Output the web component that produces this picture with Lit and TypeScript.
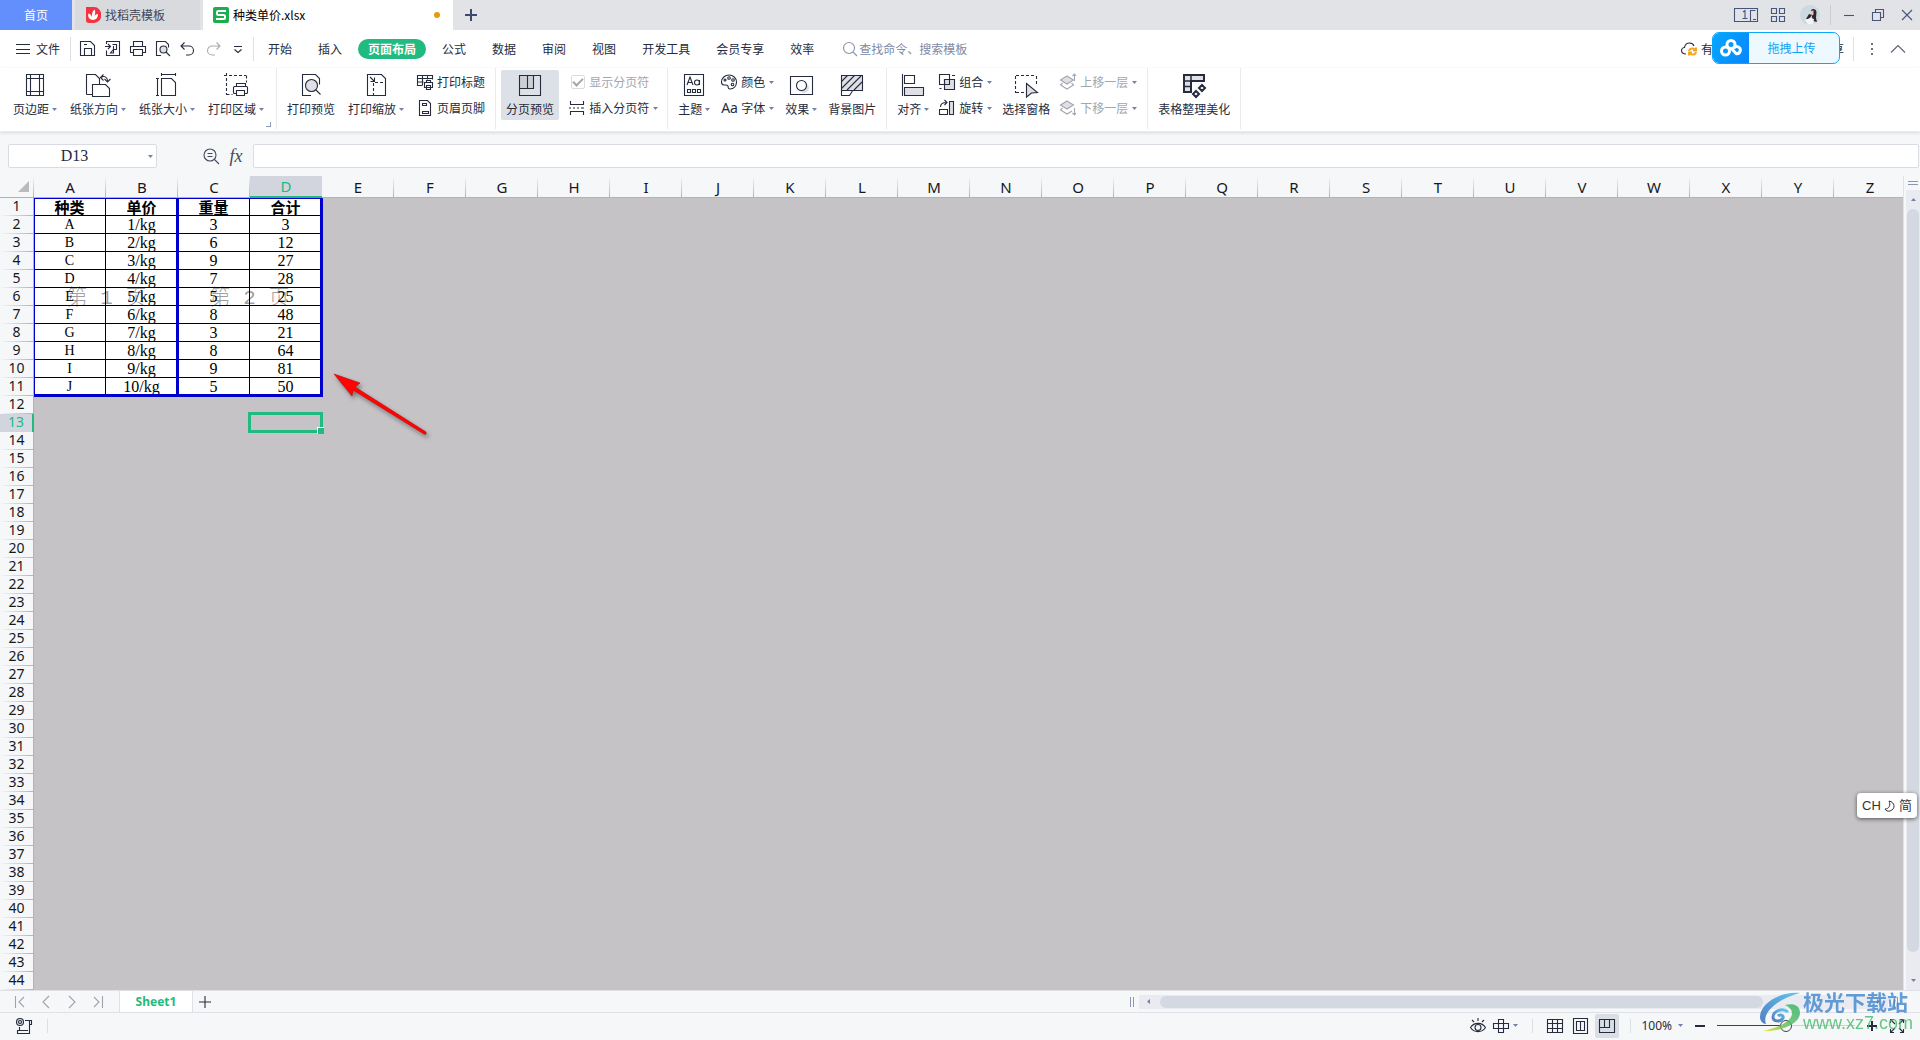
import { LitElement, html, svg, css, nothing, type TemplateResult } from "lit";
import { customElement } from "lit/decorators.js";
import { classMap } from "lit/directives/class-map.js";

const icon = (size: number, body: unknown, cls = "") =>
  html`<svg class="icon ${cls}" width=${size} height=${size} viewBox="0 0 ${size} ${size}" aria-hidden="true">${body}</svg>`;

const caret = html`<svg class="caret" width="5" height="3" viewBox="0 0 5 3" aria-hidden="true"><path d="M0 0h5L2.500 3z" /></svg>`;

/* 24px ribbon icons */
const big: Record<string, unknown> = {
  margins: svg`<path d="M3.500 1.500h17v21h-17zM7.500 1.500v21M16.500 1.500v21M3.500 5.500h17M3.500 18.500h17" />`,
  orient: svg`<path class="w" d="M.5 21.500v-20h9l4 4v6M.5 21.500h6" /><path class="w" d="M6.500 11.500h13l4 4v8h-17z" /><path d="M15 4.500c3-2 6-1 7 4M17.500 1.500l-3 3 3 3M24.500 6l-3 3-3-3" />`,
  size: svg`<path class="w" d="M6.500 5.500h10l4 4v13h-14z" /><path d="M6.500 1.500h14M6.500 0v3M20.500 0v3M2.500 5.500v17M1 5.500h3M1 22.500h3" />`,
  area: svg`<path stroke-dasharray="3 2" d="M2.500 0v22M0 2.500h22M22.500 2.500v7M2.500 21.500h6" /><path class="w" d="M12.500 14.500v-4h9v4" /><rect class="w" x="9.500" y="13.500" width="14" height="7" rx="1" /><path class="w" d="M12.500 17.500h8v5h-8z" />`,
  preview: svg`<path d="M12 22.500H3.500v-21h13l4 4v6" /><circle class="f" cx="12.500" cy="12.500" r="6" /><path d="M17 17l4.500 4.500" />`,
  scale: svg`<path class="w" d="M3.500 1.500h14l4 4v17h-18z" /><path stroke-dasharray="3 2" d="M9.500 10v12M11 9.500h10" /><path d="M6 4l4.500 4.500M10.500 4.500v4h-4" />`,
  pagebreak: svg`<rect x="1.500" y="2.500" width="14" height="13" fill="#cdced6" stroke="none" /><path d="M1.500 2.500h21v20h-21zM15.500 2.500v13h-14M9.500 2.500v13" />`,
  theme: svg`<path d="M2.500 1.500h19v21h-19zM5.500 16.500h3v3h-3zM10.500 16.500h3v3h-3zM15.500 16.500h3v3h-3zM5 12l3-8 3 8M6 9.500h4" /><circle cx="15" cy="9.500" r="2.500" /><path d="M17.500 7v5" />`,
  effect: svg`<path d="M1.500 3.500h22v18h-22z" /><circle cx="15" cy="15" r="5" fill="#dedfe4" stroke="none" /><circle class="w" cx="12.500" cy="12.500" r="5" />`,
  background: svg`<path class="f" d="M1.500 2.500h21v15h-21z" /><path class="w" d="M1.500 17.500h11l-1 2-2 3h-8z" /><path d="M1.500 8.500l6-6M1.500 15.500l13-13M7 17l14-14M14 17l8-8" />`,
  align: svg`<path d="M1.500 1v22M3.500 2.500h10v8h-10z" /><path class="f" d="M3.500 14.500h19v8h-19z" />`,
  pane: svg`<path stroke-dasharray="3 2" d="M1.500 3v17M2 2.500h20M22.500 3v8M2 19.500h10" /><path class="f" d="M12.500 10.500l11 9-6 .5-5 4z" />`,
  beautify: svg`<path class="f" stroke-width="2" d="M2 2h20v6h-13v11h-7z" /><path stroke-width="1.500" d="M2 8h8M2 13.500h7M9 2v6" /><path stroke-width="2" d="M20 12l3 3-3 3-3-3zM14 18l3 3-3 3-3-3z" />`,
};

/* 16px icons */
const small: Record<string, unknown> = {
  menu: svg`<path d="M1 3.500h14M1 8.500h14M1 12.500h14" />`,
  save: svg`<path d="M.5 13.500v-13h10l4 4v10h-14zM4.500 14v-6.500h7v7M4 3.500h3" />`,
  pdf: svg`<path d="M1.500 3v-2.500h13v14h-13v-5M0 5.500h5M3 3l2.500 2.500-2.500 2.500M7.500 3.500h4v5h-3l-3 3.500h3v-7" />`,
  print: svg`<path d="M3.500 5.500v-5h9v5M3.500 11.500h-3v-6h15v6h-3M3.500 8.500h9v6h-9z" />`,
  find: svg`<path d="M6 14.500H1.500V.5h9l3 3v3" /><circle class="f" cx="8.500" cy="8.500" r="3.500" /><path d="M11 11l4 4" />`,
  undo: svg`<path d="M4.500 1.500L1 5l3.500 3.500M1 5h8a4.500 4.500 0 0 1 0 9H6" />`,
  redo: svg`<path d="M11.500 1.500L15 5l-3.500 3.500M15 5H7a4.500 4.500 0 0 0 0 9h3" />`,
  more: svg`<path d="M4 5.500h8M4.500 8.500l3.500 3 3.500-3" />`,
  search: svg`<circle cx="7" cy="7" r="5.500" /><path d="M11 11l4 4" />`,
  titles: svg`<path d="M5 11.500H.5v-10h15v4M.5 4.500h15M.5 8h6M5.500 1.500v10M10.500 1.500v4" /><path class="w" d="M7.500 8.500h8v5h-8zM9.500 8.500v-2h4v2M9.500 11.500h4v4h-4z" />`,
  headfoot: svg`<path d="M2.500.5h8l3 3v12h-11zM5.500 3.500h4v2h-4zM5.500 11.500h6v2h-6z" />`,
  insertbreak: svg`<path d="M1.500 1v3.500h13V1M1.500 15v-3.500h13V15M0 8h2M4 8h2M8 8h2M12 8h3" />`,
  palette: svg`<path d="M8 1C4 1 .5 4 .5 8c0 2 1 3 2.500 3 2 0 3-.5 4 1 .5 2-.5 3 2 3 4 0 6.500-3 6.500-7S12 1 8 1z" /><circle cx="4" cy="6" r="1" /><circle cx="8" cy="4" r="1.300" /><circle cx="12" cy="6" r="1.300" /><circle cx="11.500" cy="10.500" r="1.300" />`,
  group: svg`<path d="M.5.500h10v10h-10z" /><path class="f" d="M5.500 5.500h10v10h-10z" /><path d="M5.500 10.500v-5h5v5zM13 1.500h3M.5 14.500h2" />`,
  rotate: svg`<path d="M.5 9.500h8v5h-8z" /><path class="f" d="M10.500 1.500h4v13h-4z" /><path d="M1.500 7c0-3 2-4.500 6-4.500M5.500 0L8 2.500 5.500 5" />`,
  forward: svg`<path class="f" d="M7 2l6.500 4L7 10 .5 6z" /><path d="M2.500 9L.5 11 7 15l6.500-4-2-2M14.500 7V0M12.500 2l2-2 1.500 2" />`,
  backward: svg`<path class="f" d="M7 1l6.500 4L7 9 .5 5z" /><path d="M2.500 8L.5 10 7 14l5-3M14.500 8v7M12.500 13l2 2 1.500-2" />`,
  zoomout: svg`<circle cx="7" cy="7" r="6" /><path d="M4.500 5.500h5M4.500 8.500h5M11.500 11.500L16 16" />`,
  first: svg`<path d="M3.500 2v12M12 3L7 8l5 5" />`,
  prev: svg`<path d="M11 2L5 8l6 6" />`,
  next: svg`<path d="M5 2l6 6-6 6" />`,
  last: svg`<path d="M12.500 2v12M4 3l5 5-5 5" />`,
  plus: svg`<path d="M8 2v12M2 8h12" />`,
  macro: svg`<circle class="f" cx="4" cy="4" r="3.500" /><circle cx="4" cy="4" r="1.500" /><path d="M9 2.500h6.500v4h-2v9H1.500v-3h10.500M3.500 9v3M13.500 2.500v4" />`,
  eye: svg`<path d="M.5 9.500C4 4 12 4 15.500 9.500 12 15 4 15 .5 9.500z" /><circle cx="8" cy="9.500" r="3" /><path d="M8 0v3M2 2l2 2M14 2l-2 2" />`,
  cross: svg`<path d="M5.500 1.500h5v13h-5zM.5 5.500h15v5H.5z" />`,
  normal: svg`<path d="M.5 1.500h15v13H.5zM.5 5.500h15M.5 10.500h15M5.500 1.500v13M10.500 1.500v13" />`,
  layout: svg`<path d="M.5.500h14v15H.5zM3.500 3.500h8v9h-8zM7.500 3.500v9" />`,
  breakview: svg`<path d="M.5 1.500h15v13H.5zM10.500 1.500v8H.5M5.500 1.500v8" />`,
  full: svg`<path d="M5 1.500H1.500V5M1.500 1.500L6 6M11 1.500h3.500V5M14.500 1.500L10 6M5 14.500H1.500V11M1.500 14.500L6 10M11 14.500h3.500V11M14.500 14.500L10 10" />`,
  panes: svg`<path d="M1.500 1.500h5v5h-5zM9.500 1.500h5v5h-5zM1.500 9.500h5v5h-5zM9.500 9.500h5v5h-5z" />`,
  min: svg`<path d="M3 8.500h10" />`,
  restore: svg`<path d="M2.500 5.500h8v8h-8zM5.500 5v-2.500h8v8H11" />`,
  close: svg`<path d="M3 3l10 10M13 3L3 13" />`,
  dots: svg`<path stroke-width="2" d="M8 2v2M8 7v2M8 12v2" />`,
  up: svg`<path d="M1 11.500l7-7 7 7" />`,
  cloud: svg`<path d="M5 13C2 13 .5 11.500.5 9.500.5 8 2 6.500 3.500 6.500 4 3.500 6 2 8.500 2s4 1.500 4.500 3" /><path stroke="#f5a623" stroke-width="2" d="M8 10c.5-3 5-3.500 6-1M15 11c-.5 3-5 3.500-6 1M15 6.500v3h-3M8 14.500v-3h3" />`,
};

interface Cmd { icon: string; label: string; drop?: boolean; active?: boolean; dim?: boolean; check?: boolean }
type Slot = Cmd | Cmd[];

const groups: { cls: string; items: Slot[] }[] = [
  { cls: "first", items: [
    { icon: "margins", label: "页边距", drop: true }, { icon: "orient", label: "纸张方向", drop: true },
    { icon: "size", label: "纸张大小", drop: true }, { icon: "area", label: "打印区域", drop: true } ] },
  { cls: "wide", items: [
    { icon: "preview", label: "打印预览" }, { icon: "scale", label: "打印缩放", drop: true },
    [{ icon: "titles", label: "打印标题" }, { icon: "headfoot", label: "页眉页脚" }] ] },
  { cls: "tight", items: [
    { icon: "pagebreak", label: "分页预览", active: true },
    [{ icon: "", label: "显示分页符", check: true, dim: true }, { icon: "insertbreak", label: "插入分页符", drop: true }] ] },
  { cls: "mid", items: [
    { icon: "theme", label: "主题", drop: true },
    [{ icon: "palette", label: "颜色", drop: true }, { icon: "Aa", label: "字体", drop: true }],
    { icon: "effect", label: "效果", drop: true }, { icon: "background", label: "背景图片" } ] },
  { cls: "narrow", items: [
    { icon: "align", label: "对齐", drop: true },
    [{ icon: "group", label: "组合", drop: true }, { icon: "rotate", label: "旋转", drop: true }],
    { icon: "pane", label: "选择窗格" },
    [{ icon: "forward", label: "上移一层", drop: true, dim: true }, { icon: "backward", label: "下移一层", drop: true, dim: true }] ] },
  { cls: "narrow", items: [{ icon: "beautify", label: "表格整理美化" }] },
];

const menus = ["开始", "插入", "页面布局", "公式", "数据", "审阅", "视图", "开发工具", "会员专享", "效率"];
const columns = Array.from({ length: 26 }, (_, i) => String.fromCharCode(65 + i));
const rowNumbers = Array.from({ length: 44 }, (_, i) => i + 1);
const data = [
  ["种类", "单价", "重量", "合计"],
  ["A", "1/kg", "3", "3"], ["B", "2/kg", "6", "12"], ["C", "3/kg", "9", "27"], ["D", "4/kg", "7", "28"],
  ["E", "5/kg", "5", "25"], ["F", "6/kg", "8", "48"], ["G", "7/kg", "3", "21"], ["H", "8/kg", "8", "64"],
  ["I", "9/kg", "9", "81"], ["J", "10/kg", "5", "50"],
];

@customElement("app-root")
export class AppRoot extends LitElement {
  static styles = css`
    :host { display: flex; flex-direction: column; height: 100vh; overflow: hidden; position: relative;
      font: 12px/16px "Noto Sans CJK SC", "Noto Sans", sans-serif; color: #262c3d; background: #f5f7f9; }
    * { box-sizing: border-box; }
    button { font: inherit; color: inherit; background: none; border: 0; padding: 0; margin: 0; display: inline-flex; align-items: center; justify-content: center; white-space: nowrap; flex: none; }
    input { font: inherit; color: inherit; margin: 0; min-width: 0; }
    .icon { flex: none; fill: none; stroke: currentColor; stroke-width: 1.1; overflow: visible; display: block; }
    .icon .w { fill: #fff; }
    .icon .f { fill: #dfe0e6; }
    .caret { flex: none; fill: #7482a3; display: block; }
    .sep { width: 1px; background: #dcdfe5; flex: none; }

    .tabs { display: flex; height: 30px; background: #e1e3e7; flex: none; }
    .home { width: 72px; background: #628ffc; color: #fff; margin-right: 3px; }
    .tab { display: flex; align-items: center; gap: 4px; padding: 0 11px; width: 125px; background: #d9dade; color: #3f4658; margin-right: 3px; }
    .tab.on { width: 250px; padding: 0 13px 0 10px; background: #fff; color: #000; margin-right: 0; }
    .dirty { width: 6px; height: 6px; border-radius: 3px; background: #e79a0a; margin-left: auto; }
    .newtab { width: 36px; color: #3d4a6b; }
    .newtab .icon { stroke-width: 2; }
    .win { margin-left: auto; display: flex; align-items: center; color: #47557c; padding-right: 5px; }
    .win button { width: 16px; height: 24px; }
    .win .dual { width: 24px; margin-right: 12px; }
    .win .avatar { width: 20px; margin: 0 10px 0 14px; }
    .win .sep { height: 20px; background: #c9ccd3; margin-right: 10px; }
    .win .gap { margin-right: 13px; }

    .menu { display: flex; align-items: center; height: 38px; background: #fff; flex: none; padding-left: 15px; }
    .menu .file { gap: 5px; margin-right: 10px; }
    .menu .sep { height: 24px; }
    .quick { display: flex; gap: 9px; padding: 0 9px; }
    .quick .redo { color: #a9acb4; }
    .quick .more { margin-right: -2px; }
    .names { display: flex; gap: 6px; padding-left: 4px; }
    .names button { height: 20px; border-radius: 10px; padding: 0 10px; }
    .names .on { background: #21ba80; color: #fff; font-weight: 700; }
    .search { display: flex; align-items: center; gap: 1px; margin-left: 18px; color: #8a94ab; }
    .search input { border: 0; background: none; padding: 0; width: 130px; outline: 0; }
    .search input::placeholder { color: #8089a3; opacity: 1; }
    .side { margin-left: auto; display: flex; align-items: center; padding-right: 14px; }
    .side .cloud { gap: 4px; margin-right: 83px; }
    .side .share { margin-right: 9px; }
    .side .dots { margin: 0 10px 0 10px; color: #6d7282; }
    .side .up { color: #5c6273; }

    .ribbon { display: flex; background: #fff; height: 64px; flex: none; padding-bottom: 2px; border-bottom: 1px solid #e9ebee; box-shadow: 0 1px 3px #0000001f; position: relative; }
    .group { display: flex; gap: 12px; padding: 2px 10px 0; border-right: 1px solid #e9ebef; position: relative; }
    .group.first { gap: 13px; padding: 2px 12px 0 13px; }
    .group.wide { gap: 13px; }
    .group.tight { padding: 2px 9px 0 5px; gap: 10px; }
    .group.mid { gap: 11px; }
    .group.narrow { gap: 10px; }
    .cmd { flex-direction: column; justify-content: flex-start; height: 50px; padding-top: 3px; gap: 4px; }
    .cmd.on { background: #dbe1e6; padding: 3px 5px 0; border-radius: 2px; }
    .cmd .cap { display: flex; align-items: center; gap: 3px; }
    .stack { display: flex; flex-direction: column; gap: 2px; }
    .row { height: 24px; display: flex; align-items: center; justify-content: flex-start; gap: 4px; }
    .row .icon { width: 16px; }
    .dim, .dim .icon { color: #a3a6ad; }
    .aa { width: 16px; font: 14px/16px "Noto Sans", sans-serif; }
    .tick { appearance: none; width: 14px; height: 14px; border: 1px solid #dcdcdc; border-radius: 2px; display: grid; place-items: center; margin-left: 2px; }
    .tick:checked::before { content: ""; width: 8px; height: 4px; border: solid #a7a7a7; border-width: 0 0 2px 2px; transform: rotate(-45deg); margin-bottom: 3px; }
    .launch { position: absolute; right: 5px; bottom: 2px; width: 5px; height: 5px; border: solid #8f9ab5; border-width: 0 1px 1px 0; }

    .formula { display: flex; align-items: center; height: 44px; flex: none; padding: 4px 1px 0 8px; }
    .name { display: flex; align-items: center; width: 149px; height: 24px; background: #fff; border: 1px solid #d9dce3; border-radius: 2px; margin-right: 46px; padding-right: 3px; }
    .name input { flex: 1; border: 0; text-align: center; background: none; padding: 0 8px 0 0; font: 16px/22px "Liberation Serif", serif; }
    .fx { width: 34px; color: #434a5c; font: italic 18px/20px "Liberation Serif", serif; }
    .fbox { flex: 1; height: 24px; border: 1px solid #d9dce3; border-radius: 2px; background: #fff; padding: 0 6px; }
    .zoomicon { color: #434a5c; }

    .body { flex: 1; display: flex; min-height: 0; }
    .sheet { flex: 1; min-width: 0; overflow: hidden; position: relative; background: #c5c3c6; border-right: 1px solid #dfe1e6; }
    table { border-collapse: separate; border-spacing: 0; table-layout: fixed; width: 1906px; }
    .c0 { width: 34px; }
    th, td { padding: 0; font-weight: 400; text-align: center; white-space: nowrap; }
    thead th { height: 22px; border-bottom: 1px solid #a9b3ca; font: 15px/18px "Noto Sans", sans-serif; color: #16181d;
      background: linear-gradient(#f5f7f9, #aab3c8) right / 1px 100% no-repeat #f5f7f9; }
    thead th.sel { background: #d2d5dd; color: #21ba80; border-bottom: 2px solid #21ba80; }
    .corner svg { display: block; margin: 0 0 0 18px; fill: #b9bbbf; }
    tbody th { height: 18px; border-right: 1px solid #a9b3ca; font: 14px/16px "Noto Sans", sans-serif; color: #16181d; padding-bottom: 2px;
      background: linear-gradient(90deg, #f5f7f9, #aab3c8) bottom / 100% 1px no-repeat #f5f7f9; }
    tbody th.sel { background: #d2d5dd; color: #21ba80; border-right: 2px solid #21ba80; }
    td { height: 18px; }
    td.v { background: #fff; border: solid #000; border-width: 0 1px 1px 0; color: #000; padding-top: 1px; font: 16px/16px "Liberation Serif", serif; }
    td.v.k { font-size: 14px; }
    tr:first-child td.v { font: 700 15px/17px "Noto Sans CJK SC", sans-serif; padding: 0; }
    .page { position: absolute; top: 22px; height: 199px; border: solid #0000cd; display: flex; align-items: center; justify-content: center; color: #00000066; font: 21px/24px "Liberation Mono", "Noto Sans CJK SC", monospace; white-space: nowrap; }
    .page span { margin-top: 5px; font-weight: 300; }
    .p1 { left: 34px; width: 144px; border-width: 1px 0 3px 1px; }
    .p2 { left: 176px; width: 147px; border-width: 1px 3px 3px 3px; }
    .cursor { position: absolute; left: 248px; top: 236px; width: 75px; height: 21px; border: 3px solid #21ba80; }
    .cursor::after { content: ""; position: absolute; right: -4px; bottom: -4px; width: 6px; height: 6px; background: #21ba80; border: solid #fff; border-width: 1px 0 0 1px; }
    .arrow { position: absolute; left: 325px; top: 190px; filter: drop-shadow(2px 3px 2px #0006); }

    .vbar { width: 16px; flex: none; display: flex; flex-direction: column; align-items: center; padding-left: 2px; }
    .split { width: 10px; height: 4px; border: solid #8a97b3; border-width: 1px 0; margin: 5px 0; }
    .vtrack { flex: 1; width: 14px; background: #e9ebf0; display: flex; flex-direction: column; align-items: center; padding: 8px 0; }
    .vthumb { width: 12px; border-radius: 6px; background: #d4d8e1; margin: 8px 0 27px; flex: 1; }
    .flip { transform: rotate(180deg); }

    .sheets { height: 23px; flex: none; display: flex; align-items: center; border: solid #dfe1e7; border-width: 1px 0; padding-left: 12px; }
    .nav { display: flex; gap: 10px; color: #9fa3ad; margin-right: 13px; }
    .stab { height: 21px; width: 74px; background: #fff; color: #21ba80; font: 700 12px/20px "Noto Sans", sans-serif; border: solid #dfe1e7; border-width: 0 1px; }
    .add { margin-left: 4px; width: 16px; }
    .hwrap { margin-left: auto; width: 41.4%; display: flex; align-items: center; padding-right: 22px; }
    .grip { width: 4px; height: 10px; border: solid #8a97b3; border-width: 0 1px; }
    .htrack { flex: 1; height: 14px; background: #e9ebf0; display: flex; align-items: center; padding: 0 7px; margin: 0 6px 0 5px; }
    .hthumb { width: 82%; height: 12px; border-radius: 6px; background: #d4d8e1; margin: 0 auto 0 9px; }
    .left { transform: rotate(90deg); }
    .right { transform: rotate(-90deg); }

    .status { height: 27px; flex: none; display: flex; align-items: center; padding: 0 15px 2px 16px; }
    .status .sep { height: 14px; }
    .status .s1 { margin-left: 15px; }
    .view { margin-left: auto; display: flex; align-items: center; }
    .view .drop { gap: 4px; margin: 0 14px 0 7px; }
    .view .vb { width: 24px; height: 24px; margin-left: 2px; }
    .view .vb.m { margin-left: 10px; }
    .view .vb.on { background: #d9dfe5; border-radius: 2px; }
    .view .s2 { margin-left: 11px; }
    .pct { gap: 6px; margin: 0 11px 0 10px; font: 12px/16px "Noto Sans", sans-serif; }
    .sign { width: 12px; height: 16px; }
    .sign::before { content: ""; width: 10px; height: 2px; background: #262c3d; }
    .sign.p::before { background: linear-gradient(#262c3d, #262c3d) center / 10px 2px no-repeat, linear-gradient(#262c3d, #262c3d) center / 2px 10px no-repeat; height: 10px; }
    .zoom { appearance: none; width: 138px; height: 14px; margin: 0 11px 0 11px; background: linear-gradient(90deg, #3a4258 50%, #cdd1da 50%) center / 100% 1px no-repeat; }
    .zoom::-webkit-slider-thumb { appearance: none; width: 12px; height: 12px; border: 1px solid #444; border-radius: 6px; background: #f5f7f9; }
    .fullb { margin-left: 11px; }

    .upload { position: absolute; right: 80px; top: 32px; width: 128px; height: 32px; border: 1px solid #0ba6fa; border-radius: 7px; background: #edf8ff; color: #0ba2fa; overflow: hidden; }
    .upload .logo { width: 36px; height: 32px; background: linear-gradient(120deg, #06a7ff, #0786fb); display: grid; place-items: center; }
    .upload .txt { flex: 1; text-align: center; padding-right: 5px; }
    .ime { position: absolute; right: 3px; bottom: 222px; height: 25px; width: 60px; background: #fff; border-radius: 4px; box-shadow: 0 1px 4px #0009; display: flex; align-items: center; justify-content: center; gap: 3px; color: #333; font: 13px/16px "Liberation Sans", "Noto Sans CJK SC", sans-serif; }
    .brand { position: absolute; right: 7px; bottom: 8px; display: flex; align-items: flex-end; gap: 2px; opacity: .8; }
    .brand .t { display: flex; flex-direction: column; font: 700 21px/25px "Noto Sans CJK SC", sans-serif; color: #3f86cf; }
    .brand .u { font: 18px/18px "Liberation Sans", sans-serif; color: #47b96b; }
  `;

  private renderBig(c: Cmd): TemplateResult {
    return html`<button class=${classMap({ cmd: true, on: !!c.active })}>
      ${icon(24, big[c.icon])}<span class="cap">${c.label}${c.drop ? caret : nothing}</span></button>`;
  }

  private renderRow(c: Cmd): TemplateResult {
    if (c.check) return html`<label class="row dim"><input class="tick" type="checkbox" checked disabled />${c.label}</label>`;
    return html`<button class=${classMap({ row: true, dim: !!c.dim })}>
      ${c.icon === "Aa" ? html`<span class="aa">Aa</span>` : icon(16, small[c.icon])}<span>${c.label}</span>${c.drop ? caret : nothing}</button>`;
  }

  private renderTabs() {
    return html`<header class="tabs">
      <button class="home">首页</button>
      <div class="tab">
        <svg width="15" height="16" viewBox="0 0 15 16"><path fill="#f5333f" d="M0 0h8a7 7 0 0 1 7 8 7 7 0 0 1-7 8H3a3 3 0 0 1-3-3z" /><path fill="#fff" d="M6.500 13C2.500 12 1.500 9 2.500 6.500c2 .5 3 2 3.500 4C5.500 7 6.500 4 8.500 2.500c1.500 2.500 .5 6-1 8C8.500 8.500 10 7 12 7c0 3-1.500 6-5.500 6z" /></svg>
        <span>找稻壳模板</span>
      </div>
      <div class="tab on">
        <svg width="16" height="16" viewBox="0 0 16 16"><rect width="16" height="16" rx="2" fill="#1cae4e" /><path fill="none" stroke="#fff" stroke-width="2" d="M13 4H5.500Q4 4 4 5.500V6.500Q4 8 5.500 8H10.500Q12 8 12 9.500V10.500Q12 12 10.500 12H3" /></svg>
        <span>种类单价.xlsx</span><i class="dirty"></i>
      </div>
      <button class="newtab">${icon(16, small.plus)}</button>
      <div class="win">
        <button class="dual"><svg class="icon" width="24" height="14" viewBox="0 0 24 14"><path d="M.5.500h23v13H.5zM9 4l2-1.500v8M8.500 10.500h5M16.500 13V2.500h5M19 11.500h3" /></svg></button>
        <button>${icon(16, small.panes)}</button>
        <button class="avatar"><svg width="20" height="20" viewBox="0 0 20 20"><circle cx="10" cy="10" r="10" fill="#ccd9de" /><path fill="#2d2530" d="M11 5c2-2 5-1 5.500 2l-.5 6 1 4-4-1-1-4z" /><path fill="#edc4b5" d="M10.500 6l3-.5v4l-2 1.500z" /><path fill="#2d2530" d="M9 9l3 1-3 4-3 0z" /><path fill="#f2f6f7" d="M5 15l5-2 4 1-1 5.500H8z" /></svg></button>
        <i class="sep"></i>
        <button class="gap">${icon(16, small.min)}</button>
        <button class="gap">${icon(16, small.restore)}</button>
        <button>${icon(16, small.close)}</button>
      </div>
    </header>`;
  }

  private renderMenu() {
    return html`<nav class="menu">
      <button class="file">${icon(16, small.menu)}文件</button><i class="sep"></i>
      <div class="quick">
        ${["save", "pdf", "print", "find", "undo", "redo", "more"].map((n) => html`<button class=${n}>${icon(16, small[n])}</button>`)}
      </div><i class="sep"></i>
      <div class="names">${menus.map((m) => html`<button class=${m === "页面布局" ? "on" : ""}>${m}</button>`)}</div>
      <label class="search">${icon(16, small.search)}<input type="text" placeholder="查找命令、搜索模板" /></label>
      <div class="side">
        <button class="cloud">${icon(16, small.cloud)}有修改</button>
        <button class="share">分享</button><i class="sep"></i>
        <button class="dots">${icon(16, small.dots)}</button>
        <button class="up">${icon(16, small.up)}</button>
      </div>
    </nav>`;
  }

  private renderSheet() {
    return html`<main class="body">
      <div class="sheet">
        <table>
          <colgroup><col class="c0" />${columns.map(() => html`<col />`)}</colgroup>
          <thead><tr>
            <th class="corner"><svg width="11" height="11" viewBox="0 0 11 11"><path d="M11 0v11H0z" /></svg></th>
            ${columns.map((c) => html`<th scope="col" class=${c === "D" ? "sel" : ""}>${c}</th>`)}
          </tr></thead>
          <tbody>
            ${rowNumbers.map((n) => html`<tr>
              <th scope="row" class=${n === 13 ? "sel" : ""}>${n}</th>
              ${columns.map((_, i) => {
                const v = data[n - 1]?.[i];
                return v === undefined ? html`<td></td>` : html`<td class=${i === 0 ? "v k" : "v"}>${v}</td>`;
              })}
            </tr>`)}
          </tbody>
        </table>
        <div class="page p1"><span>第 1 页</span></div>
        <div class="page p2"><span>第 2 页</span></div>
        <div class="cursor"></div>
        <svg class="arrow" width="110" height="80" viewBox="0 0 110 80"><path fill="#fe0404" stroke="#c00" stroke-width=".6" d="M9 8l26 9-5 4 71 45q1 3-2 2L28 24l-1 6z" /></svg>
      </div>
      <div class="vbar">
        <i class="split"></i>
        <div class="vtrack"><span class="flip">${caret}</span><i class="vthumb"></i>${caret}</div>
      </div>
    </main>`;
  }

  private renderFooter() {
    return html`<div class="sheets">
        <div class="nav">${["first", "prev", "next", "last"].map((n) => html`<button>${icon(16, small[n])}</button>`)}</div>
        <button class="stab">Sheet1</button>
        <button class="add">${icon(16, small.plus)}</button>
        <div class="hwrap"><i class="grip"></i>
          <div class="htrack"><span class="left">${caret}</span><i class="hthumb"></i><span class="right">${caret}</span></div>
          <i class="grip"></i>
        </div>
      </div>
      <footer class="status">
        <button>${icon(16, small.macro)}</button><i class="sep s1"></i>
        <div class="view">
          <button>${icon(16, small.eye)}</button>
          <button class="drop">${icon(16, small.cross)}${caret}</button><i class="sep"></i>
          <button class="vb m">${icon(16, small.normal)}</button>
          <button class="vb">${icon(16, small.layout)}</button>
          <button class="vb on">${icon(16, small.breakview)}</button>
          <i class="sep s2"></i>
          <button class="pct">100%${caret}</button>
          <button class="sign"></button>
          <input class="zoom" type="range" min="0" max="100" value="50" />
          <button class="sign p"></button>
          <button class="fullb">${icon(16, small.full)}</button>
        </div>
      </footer>`;
  }

  render() {
    return html`
      ${this.renderTabs()} ${this.renderMenu()}
      <section class="ribbon">
        ${groups.map((g) => html`<div class="group ${g.cls}">
          ${g.items.map((s) => Array.isArray(s) ? html`<div class="stack">${s.map((c) => this.renderRow(c))}</div>` : this.renderBig(s))}
          ${g.cls === "first" ? html`<i class="launch"></i>` : nothing}
        </div>`)}
      </section>
      <section class="formula">
        <label class="name"><input type="text" value="D13" />${caret}</label>
        <button class="zoomicon">${icon(16, small.zoomout)}</button>
        <button class="fx">fx</button>
        <input class="fbox" type="text" />
      </section>
      ${this.renderSheet()} ${this.renderFooter()}
      <button class="upload">
        <span class="logo"><svg width="22" height="18" viewBox="0 0 22 18" fill="none" stroke="#fff" stroke-width="3"><circle cx="11" cy="5.500" r="4" /><circle cx="5.500" cy="12" r="4" /><path d="M11 9l5 5.500a3.500 3.500 0 1 0-2-5.500" /></svg></span>
        <span class="txt">拖拽上传</span>
      </button>
      <div class="ime"><span>CH</span><svg width="12" height="12" viewBox="0 0 12 12" fill="none" stroke="#333"><path d="M5 1c6 1 7 8 1 10-2 .5-4 0-5-2 4 0 6-4 4-8z" /></svg><span>简</span></div>
      <div class="brand">
        <svg width="42" height="40" viewBox="0 0 42 40">
          <defs>
            <linearGradient id="b" x1="1" y1="0" x2="0" y2="1"><stop offset="0" stop-color="#3fc0ee" /><stop offset="1" stop-color="#2b5fb4" /></linearGradient>
            <linearGradient id="g" x1="1" y1="0" x2="0" y2="1"><stop offset="0" stop-color="#2faf62" /><stop offset=".6" stop-color="#5cc05c" /><stop offset="1" stop-color="#f0e000" /></linearGradient>
          </defs>
          <path fill="url(#b)" d="M41 1C22-1 1 11 1 25c0 4 3 7 6 7-4-10 8-24 34-31z" />
          <path fill="url(#g)" d="M26 13c8-2 15 0 15 8 0 11-20 19-37 18 14-3 28-9 29-17 0-5-3-7-7-9z" />
          <path fill="none" stroke="url(#b)" stroke-width="3" d="M29 20c-5-5-15-1-15 5 0 5 8 5 10 1 1-3-3-4-5-2" />
        </svg>
        <span class="t"><span>极光下载站</span><span class="u">www.xz7.com</span></span>
      </div>`;
  }
}
